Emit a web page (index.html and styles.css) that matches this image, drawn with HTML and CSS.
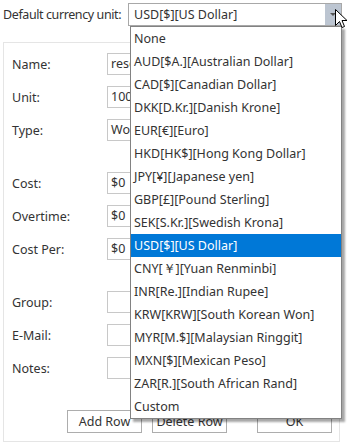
FILE: index.html
```html
<!DOCTYPE html>
<html lang="en">
<head>
    <meta charset="UTF-8">
    <meta name="viewport" content="width=device-width, initial-scale=1.0">
    <title>Resource Settings</title>
    <link rel="stylesheet" href="styles.css">
</head>
<body>

<!-- Currency selector -->
<div class="currency-row">
    <label class="currency-label">Default currency unit:</label>
    <div class="select">
        <span class="select-value">USD[$][US Dollar]</span>
        <span class="select-arrow"></span>
    </div>
</div>

<!-- Resource form -->
<div class="panel">
    <div class="section">
        <div class="row"><span class="label">Name:</span><span class="field">resource</span></div>
        <div class="row"><span class="label">Unit:</span><span class="field">100%</span></div>
        <div class="row"><span class="label">Type:</span><span class="field">Work</span></div>
    </div>
    <div class="section">
        <div class="row"><span class="label">Cost:</span><span class="field">$0</span></div>
        <div class="row"><span class="label">Overtime:</span><span class="field">$0</span></div>
        <div class="row"><span class="label">Cost Per:</span><span class="field">$0</span></div>
    </div>
    <div class="section">
        <div class="row"><span class="label">Group:</span><span class="field"></span></div>
        <div class="row"><span class="label">E-Mail:</span><span class="field"></span></div>
        <div class="row"><span class="label">Notes:</span><span class="field"></span></div>
    </div>
    <div class="buttons">
        <button class="btn btn-add">Add Row</button>
        <button class="btn btn-delete">Delete Row</button>
        <button class="btn btn-ok">OK</button>
    </div>
</div>

<!-- Open dropdown list -->
<ul class="dropdown">
    <li>None</li>
    <li>AUD[$A.][Australian Dollar]</li>
    <li>CAD[$][Canadian Dollar]</li>
    <li>DKK[D.Kr.][Danish Krone]</li>
    <li>EUR[€][Euro]</li>
    <li>HKD[HK$][Hong Kong Dollar]</li>
    <li>JPY[¥][Japanese yen]</li>
    <li>GBP[£][Pound Sterling]</li>
    <li>SEK[S.Kr.][Swedish Krona]</li>
    <li class="selected">USD[$][US Dollar]</li>
    <li>CNY[￥][Yuan Renminbi]</li>
    <li>INR[Re.][Indian Rupee]</li>
    <li>KRW[KRW][South Korean Won]</li>
    <li>MYR[M.$][Malaysian Ringgit]</li>
    <li>MXN[$][Mexican Peso]</li>
    <li>ZAR[R.][South African Rand]</li>
    <li>Custom</li>
</ul>

<!-- Mouse pointer -->
<svg class="cursor" width="13" height="21" viewBox="0 0 13 21">
    <path d="M0.5 0.5 L0.5 16.5 L4.5 12.5 L7 18.5 L9.5 17.5 L7 11.5 L12 11.5 Z" fill="#fff" stroke="#000" stroke-width="1" stroke-linejoin="miter"/>
</svg>

</body>
</html>
```

FILE: styles.css
```css
body {
  margin: 0;
  padding: 3px;
  background: #fff;
  font-family: 'Noto Sans', 'Open Sans', sans-serif;
  font-size: 12.5px;
  color: #333;
  width: 343px;
  height: 438px;
  overflow: hidden;
}

.currency-row {
  display: flex;
  align-items: center;
  height: 23px;
}

.currency-label {
  width: 125px;
  white-space: nowrap;
  letter-spacing: -0.4px;
}

.select {
  display: flex;
  align-items: center;
  width: 212px;
  height: 21px;
  border: 1px solid #a8a8a8;
  background: #fff;
}

.select-value {
  flex: 1;
  padding-left: 5px;
}

.select-arrow {
  width: 16px;
  height: 21px;
  background: #bcc5d1;
  position: relative;
}

.select-arrow::after {
  content: "";
  position: absolute;
  left: 5px;
  top: 9px;
  border-left: 3px solid transparent;
  border-right: 3px solid transparent;
  border-top: 3px solid #555;
}

.panel {
  margin-top: 16px;
  width: 335px;
  border: 1px solid #e5e5e5;
  padding: 10px 0 8px;
}

.section {
  display: flex;
  flex-direction: column;
  gap: 11px;
}

.section + .section {
  margin-top: 31px;
}

.row {
  display: flex;
  align-items: center;
  height: 22px;
}

.label {
  width: 95px;
  padding-left: 8px;
}

.field {
  width: 210px;
  height: 20px;
  line-height: 20px;
  border: 1px solid #c8c8c8;
  padding-left: 3px;
  overflow: hidden;
  white-space: nowrap;
}

.buttons {
  display: flex;
  margin-top: 31px;
  padding-left: 63px;
}

.btn {
  width: 75px;
  height: 23px;
  padding: 0;
  font: inherit;
  color: #333;
  background: #fff;
  border: 1px solid #adadad;
}

.btn-delete {
  margin-left: 10px;
}

.btn-ok {
  margin-left: 30px;
}

.dropdown {
  position: absolute;
  left: 130px;
  top: 26px;
  width: 210px;
  margin: 0;
  padding: 0;
  list-style: none;
  background: #fff;
  border: 1px solid #828282;
  box-shadow: 3px 3px 2px rgba(0, 0, 0, 0.35);
}

.dropdown li {
  height: 23px;
  line-height: 23px;
  padding-left: 3px;
  white-space: nowrap;
}

.dropdown li.selected {
  background: #0078d7;
  color: #fff;
}

.cursor {
  position: absolute;
  left: 335px;
  top: 9px;
}
```
